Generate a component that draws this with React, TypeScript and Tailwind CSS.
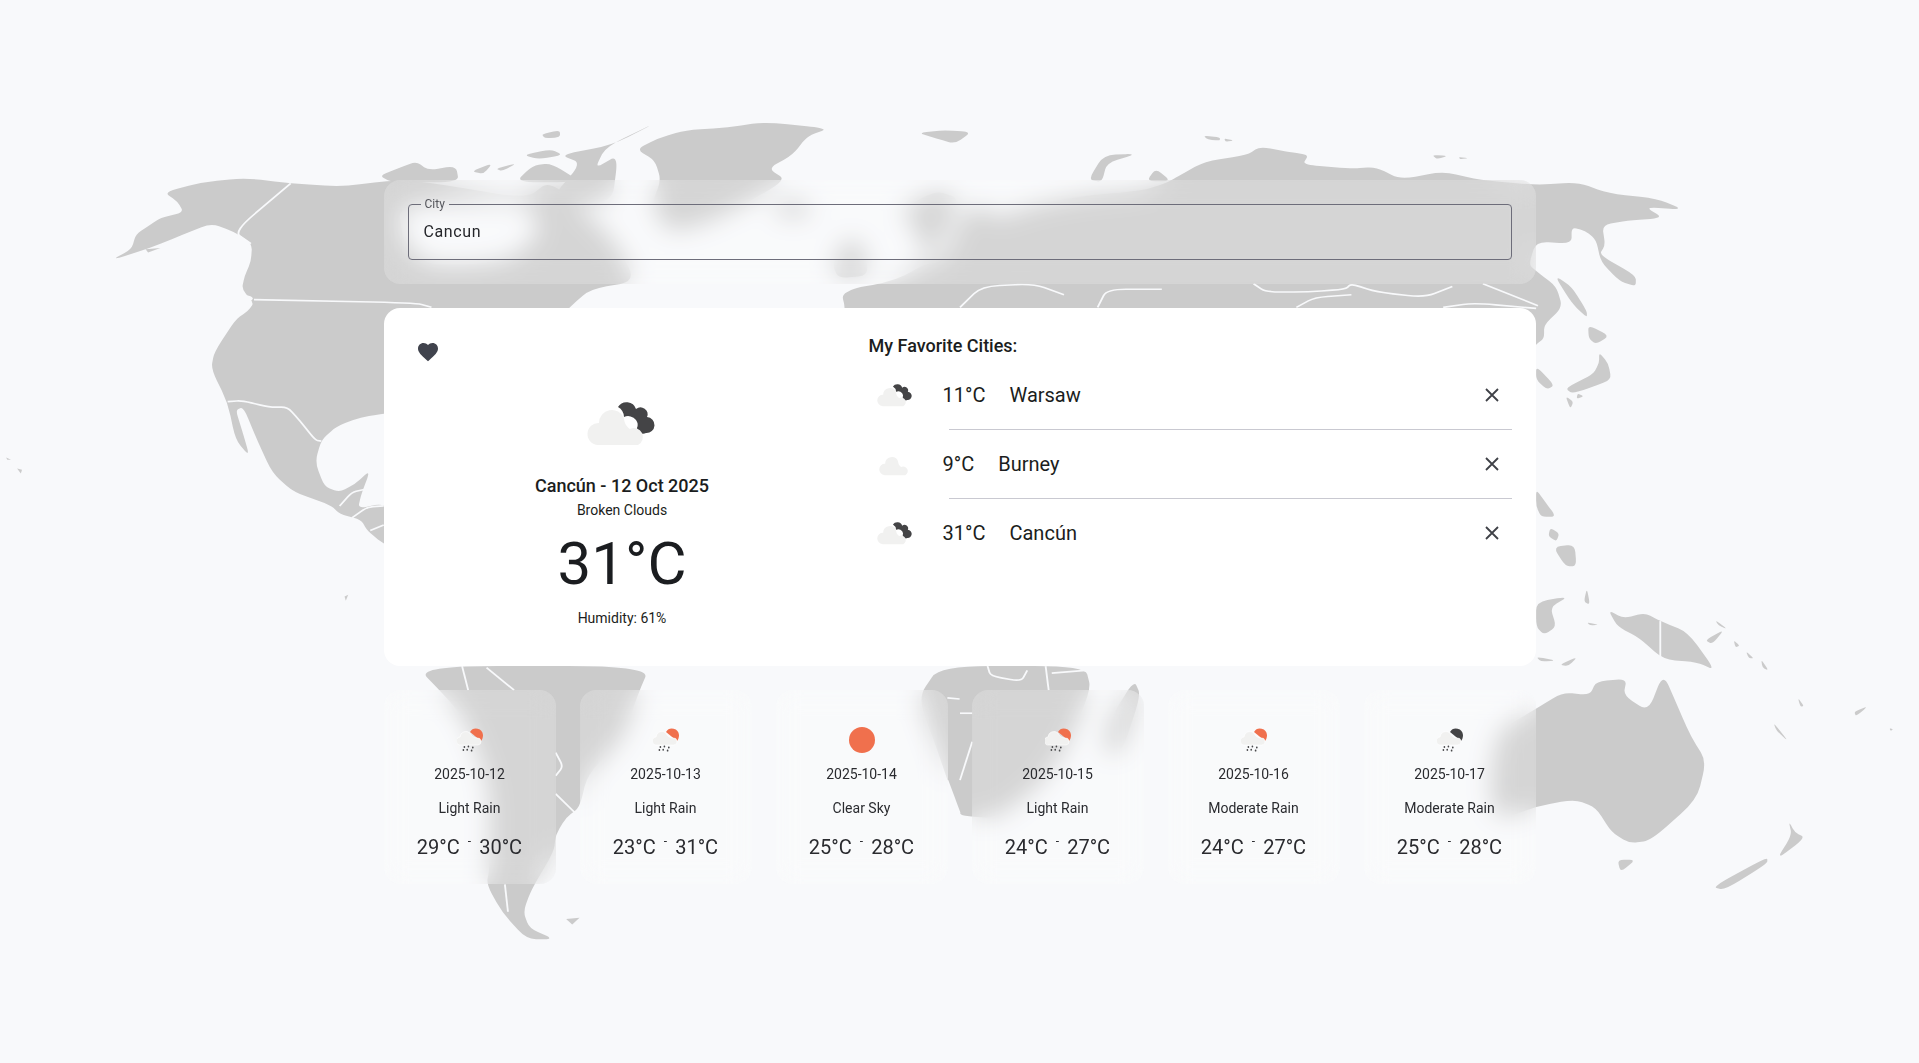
const font = { fontFamily: "Roboto, sans-serif" };

const favorites = [
  { temp: "11°C", city: "Warsaw", icon: "broken" },
  { temp: "9°C", city: "Burney", icon: "cloud" },
  { temp: "31°C", city: "Cancún", icon: "broken" },
];

const forecast = [
  { date: "2025-10-12", label: "Light Rain", min: "29°C", max: "30°C", icon: "rain" },
  { date: "2025-10-13", label: "Light Rain", min: "23°C", max: "31°C", icon: "rain" },
  { date: "2025-10-14", label: "Clear Sky", min: "25°C", max: "28°C", icon: "sun" },
  { date: "2025-10-15", label: "Light Rain", min: "24°C", max: "27°C", icon: "rain" },
  { date: "2025-10-16", label: "Moderate Rain", min: "24°C", max: "27°C", icon: "rain" },
  { date: "2025-10-17", label: "Moderate Rain", min: "25°C", max: "28°C", icon: "night" },
];

const land = "#cbcbcb";
const seaColor = "#f8f9fb";

const westLand = [
  // north america
  "182,292 215,272 222,245 245,228 262,215 300,205 290,185 268,168 330,150 400,142 475,152 560,158 640,146 700,150 860,180 900,146 1000,250 1040,330 965,345 930,378 900,420 700,560 627,572 590,578 550,595 525,620 515,660 530,705 555,715 580,700 605,675 590,720 585,745 627,735 660,770 660,820 627,810 600,785 590,765 555,755 540,738 480,715 445,680 420,620 398,560 385,565 395,600 408,650 385,620 372,552 345,490 350,460 385,400 405,385 415,370 395,345 400,320 410,295 412,262 382,240 345,225 300,245 245,270",
  // south america
  "680,1032 1062,1032 1040,1090 1020,1160 960,1230 947,1290 925,1308 908,1340 905,1370 868,1440 855,1480 865,1510 905,1530 860,1530 820,1480 795,1430 800,1400 800,1250 760,1130 730,1090",
  // africa, runs on past the middle of the page
  "1535,1032 1773,1032 1783,1075 1738,1190 1698,1250 1628,1310 1573,1305 1568,1300 1548,1240 1530,1180 1500,1090",
  "1853,1058 1864,1085 1833,1190 1803,1190 1813,1130",
  // arctic islands
  "620,138 650,125 680,112 700,128 745,120 750,150 640,150",
  "770,130 805,115 790,135",
  "810,125 845,115 820,130",
  "842,150 870,120 900,115 950,150",
  "855,100 900,90 920,100 880,108",
  "885,62 915,55 915,68 890,70",
  "915,100 1000,82 1075,40 990,85 972,125 1010,100 1000,190 900,180 950,115",
  // greenland
  "1040,90 1075,70 1120,55 1190,50 1250,40 1355,52 1320,65 1295,100 1255,125 1285,146 1200,200 1140,230 1090,240 1065,190 1080,146 1070,110",
  // iceland, britain
  "1262,195 1295,180 1330,195 1310,215 1275,212",
  "1360,300 1385,250 1410,265 1420,320 1370,325",
  // svalbard
  "1500,60 1540,55 1588,58 1560,80 1530,70",
  "1500,240 1470,200 1530,165 1568,180 1540,250 1510,300",
];

const eastLand = [
  // eurasia
  "-188,378 -193,355 -170,342 -128,335 -90,320 -60,300 -30,295 -10,250 0,215 30,190 60,215 100,200 130,190 200,175 300,165 340,150 355,140 400,112 470,100 490,85 540,95 570,100 560,118 640,125 680,122 720,145 790,130 850,146 942,155 1010,150 1060,170 1140,180 1183,200 1120,195 1150,215 1090,220 1050,228 1055,265 1045,282 1105,320 1105,340 1078,330 1048,295 1040,255 1022,238 1000,232 1000,262 942,258 930,300 942,312 975,340 985,378 955,410 955,435 942,445 900,500 -188,500",
  "210,145 235,100 290,98 240,115 232,150",
  "305,148 320,125 345,148",
  "398,65 425,68 425,74 405,72",
  "432,70 448,74 434,76",
  "772,100 798,102 780,108",
  "815,104 832,106 818,108",
  // japan
  "972,320 1000,340 1025,385 1025,397 1000,370",
  "1027,410 1062,430 1040,445 1028,435",
  "1045,460 1060,480 1065,510 1030,525 1000,535 990,525 1035,500 1045,480",
  "990,540 1003,550 998,563",
  "1010,535 1020,540 1008,545",
  "942,485 972,520 960,528 942,510",
  // south east asia
  "942,710 955,730 975,760 950,760 942,740",
  "965,780 980,790 975,805 962,795",
  "970,815 1005,810 1008,850 990,850",
  "942,915 995,905 965,925 975,960 955,975 942,960",
  "1025,890 1030,920 1020,915",
  "1025,952 1045,957 1030,958",
  "942,1015 975,1022 950,1024",
  "980,1030 1010,1015 995,1032",
  // new guinea and neighbours
  "1060,930 1085,945 1120,935 1145,950 1190,970 1235,1040 1205,1025 1150,1020 1110,980 1075,960",
  "1218,985 1250,965 1230,992",
  "1235,948 1255,965 1240,958",
  "1265,985 1275,995 1268,998",
  "1285,1005 1298,1018 1290,1018",
  "1310,1020 1322,1040 1312,1035",
  // australia
  "942,1110 985,1080 1030,1085 1040,1060 1090,1055 1085,1085 1125,1115 1150,1045 1175,1110 1195,1160 1220,1205 1205,1275 1130,1350 1095,1355 1065,1335 1040,1290 1005,1275 942,1288 890,1310 870,1290 868,1230 880,1150",
  "1075,1385 1105,1385 1080,1408",
  // new zealand
  "1355,1315 1365,1335 1382,1345 1335,1385 1360,1340",
  "1320,1380 1230,1435 1250,1440 1320,1392",
  // pacific specks
  "1330,1135 1355,1170 1335,1150",
  "1370,1090 1380,1105 1374,1106",
  "1462,1115 1485,1105 1465,1124",
  "1520,1145 1526,1148 1521,1150",
];

const westBorders = [
  "475,152 382,240 410,262",
  "415,364 680,370 705,378",
  "372,550 395,548 440,560 470,560 490,585 515,620 525,622",
  "555,740 575,715 595,710",
  "575,762 600,742 627,740",
  "605,785 627,775",
  "755,1032 765,1076",
  "795,1035 840,1076",
  "908,1190 920,1215 908,1232",
  "908,1265 940,1300",
  "825,1430 830,1480",
  "1430,350 1465,365",
  "1510,355 1550,345 1568,365 1530,378",
  "1548,1090 1568,1092",
  "1548,1240 1568,1300",
];

const eastBorders = [
  "0,378 35,340 120,335 170,355",
  "225,378 240,345 330,345",
  "480,335 500,350 570,350 630,345 640,335 680,350 760,360 805,340",
  "550,378 580,360 640,355",
  "855,335 945,375",
  "790,378 840,370 942,380",
  "1145,950 1145,1020",
  "45,1032 50,1050 100,1060 110,1040",
  "140,1032 145,1076",
  "150,1045 205,1040",
  "0,1118 20,1118",
  "20,1170 0,1240",
];

// rounds the corners of a traced outline so coasts don't look cut with scissors
const smooth = (points: string, closed: boolean) => {
  const pts = points.split(" ").map((p) => p.split(",").map(Number));
  const n = pts.length;
  const mix = (a: number[], b: number[], t: number) => `${a[0] + (b[0] - a[0]) * t} ${a[1] + (b[1] - a[1]) * t}`;
  if (!closed) {
    let d = `M${pts[0][0]} ${pts[0][1]}`;
    for (let i = 1; i < n - 1; i++) {
      d += `L${mix(pts[i], pts[i - 1], 0.35)}Q${pts[i][0]} ${pts[i][1]} ${mix(pts[i], pts[i + 1], 0.35)}`;
    }
    return `${d}L${pts[n - 1][0]} ${pts[n - 1][1]}`;
  }
  let d = `M${mix(pts[0], pts[1], 0.35)}`;
  for (let i = 1; i <= n; i++) {
    const cur = pts[i % n];
    d += `L${mix(cur, pts[i - 1], 0.35)}Q${cur[0]} ${cur[1]} ${mix(cur, pts[(i + 1) % n], 0.35)}`;
  }
  return `${d}Z`;
};

const WorldMap = () => (
  <svg className="absolute inset-0 h-full w-full" viewBox="0 0 1919 1063" preserveAspectRatio="none">
    <g transform="translate(0 100) scale(0.612 0.5485)" fill={land}>
      {westLand.map((p) => (
        <path key={p} d={smooth(p, true)} />
      ))}
      <path d={smooth("650,190 860,185 885,240 835,290 770,300 700,300 660,260", true)} fill={seaColor} />
      <ellipse cx="400" cy="362" rx="13" ry="6" fill={seaColor} />
      <polygon points="238,272 262,270 242,278" />
      <polygon points="925,1493 947,1491 935,1503" />
      <polygon points="28,672 36,674 34,681" />
      <polygon points="10,652 18,656 12,656" />
      <polygon points="563,905 569,902 565,913" />
      {westBorders.map((p) => (
        <path key={p} d={smooth(p, false)} fill="none" stroke={seaColor} strokeWidth="3" />
      ))}
    </g>
    <g transform="translate(960 100) scale(0.6116 0.5485)" fill={land}>
      {eastLand.map((p) => (
        <path key={p} d={smooth(p, true)} />
      ))}
      {eastBorders.map((p) => (
        <path key={p} d={smooth(p, false)} fill="none" stroke={seaColor} strokeWidth="3" />
      ))}
    </g>
  </svg>
);

const BrokenClouds = ({ width, dark = true }: { width: number; dark?: boolean }) => (
  <svg width={width} viewBox="0 0 70 45">
    {dark && (
      <path
        d="M31 7A10 10 0 0 1 49 9A7 7 0 0 1 60 17A8 8 0 1 1 59 33A6 6 0 0 1 50 28A8 8 0 0 0 49 20A10 10 0 0 0 37 17A12 12 0 0 0 31 7Z"
        fill="#444446"
      />
    )}
    <path d="M11 45A11 11 0 0 1 12 23A13 13 0 0 1 37 18C37 23 40 27 43 29A8 8 0 0 1 51 45Z" fill="#f1f1f0" />
  </svg>
);

const RainIcon = ({ color }: { color: string }) => (
  <svg width="26" height="26" viewBox="0 0 26 26">
    <path d="M13 5A7 7 0 0 1 26 8C26 11 25 13 24 14Z" fill={color} />
    <path
      d="M4 18A4 4 0 0 1 3 10A6 6 0 0 1 13 6C14 9 17 11 20 11A3.5 3.5 0 0 1 21 18Z"
      fill="#f1f1f0"
      stroke="#ffffff"
      strokeWidth="0.6"
    />
    <g fill="#4a4a4c">
      <rect x="6.6" y="19" width="1.6" height="2" rx="0.7" />
      <rect x="5.6" y="22" width="1.6" height="2" rx="0.7" />
      <rect x="10.6" y="18.5" width="1.6" height="2" rx="0.7" />
      <rect x="9.4" y="21.8" width="1.6" height="2" rx="0.7" />
      <rect x="15" y="19.4" width="1.6" height="2" rx="0.7" />
      <rect x="13.8" y="22.6" width="1.6" height="2" rx="0.7" />
    </g>
  </svg>
);

const ForecastIcon = ({ icon }: { icon: string }) => {
  if (icon === "sun") return <div className="h-[26px] w-[26px] rounded-full bg-[#f0704d]" />;
  return <RainIcon color={icon === "night" ? "#444446" : "#f0704d"} />;
};

export default function App() {
  return (
    <div className="relative flex min-h-screen items-center justify-center overflow-hidden bg-[#f8f9fb] pt-px" style={font}>
      <WorldMap />
      <div className="relative flex w-[1152px] flex-col gap-6">
        <div className="rounded-2xl bg-white/20 px-6 pb-6 pt-[18px] backdrop-blur-md">
          <fieldset className="h-[62px] rounded border border-[#6d6d7a] pl-3">
            <legend className="px-1 text-xs leading-none text-[#55565c]">City</legend>
            <div className="pl-[3px] pt-[10px] text-base leading-6 tracking-[0.6px] text-[#26272b]">Cancun</div>
          </fieldset>
        </div>

        <div className="flex h-[358px] rounded-2xl bg-white p-6">
          <div className="flex w-[429px] flex-col items-center text-[#1b1d20]">
            <svg className="ml-2 mt-2 self-start" width="24" height="24" viewBox="0 0 24 24" fill="#40434d">
              <path d="M12 21.35l-1.45-1.32C5.4 15.36 2 12.28 2 8.5 2 5.42 4.42 3 7.5 3c1.74 0 3.41.81 4.5 2.09C13.09 3.81 14.76 3 16.5 3 19.58 3 22 5.42 22 8.5c0 3.78-3.4 6.86-8.55 11.54L12 21.35z" />
            </svg>
            <div className="mt-9">
              <BrokenClouds width={70} />
            </div>
            <div className="mt-[27px] text-lg font-medium leading-7">Cancún - 12 Oct 2025</div>
            <div className="text-sm leading-5">Broken Clouds</div>
            <div className="mt-2 text-[60px] leading-[72px]">31°C</div>
            <div className="mt-2 text-sm leading-5">Humidity: 61%</div>
          </div>

          <div className="ml-8 flex-1 text-[#1b1d20]">
            <div className="text-lg font-medium leading-7">My Favorite Cities:</div>
            <div className="pt-px">
              {favorites.map((f, i) => (
                <div key={f.city}>
                  {i > 0 && <div className="ml-[80px] h-px bg-[#c9c9d1]" />}
                  <div className="flex h-[68px] items-center text-xl">
                    <div className={`w-[74px] ${f.icon === "broken" ? "pl-2" : "pl-[10px]"}`}>
                      <BrokenClouds width={36} dark={f.icon === "broken"} />
                    </div>
                    <span>{f.temp}</span>
                    <span className="ml-6 flex-1">{f.city}</span>
                    <svg className="mr-3" width="16" height="16" viewBox="0 0 16 16" stroke="#3f4147" strokeWidth="1.8">
                      <path d="M2 2L14 14M14 2L2 14" />
                    </svg>
                  </div>
                </div>
              ))}
            </div>
          </div>
        </div>

        <div className="grid grid-cols-6 gap-6">
          {forecast.map((d) => (
            <div
              key={d.date}
              className="flex h-[194px] flex-col items-center rounded-2xl bg-white/20 pt-[37px] text-[#2a2b2f] backdrop-blur-md"
            >
              <ForecastIcon icon={d.icon} />
              <div className="mt-[11px] text-sm leading-5">{d.date}</div>
              <div className="mt-[14px] text-sm leading-5">{d.label}</div>
              <div className="mt-[15px] flex items-start text-xl leading-7">
                <span>{d.min}</span>
                <span className="mx-[8px] text-xs leading-4">-</span>
                <span>{d.max}</span>
              </div>
            </div>
          ))}
        </div>
      </div>
    </div>
  );
}
